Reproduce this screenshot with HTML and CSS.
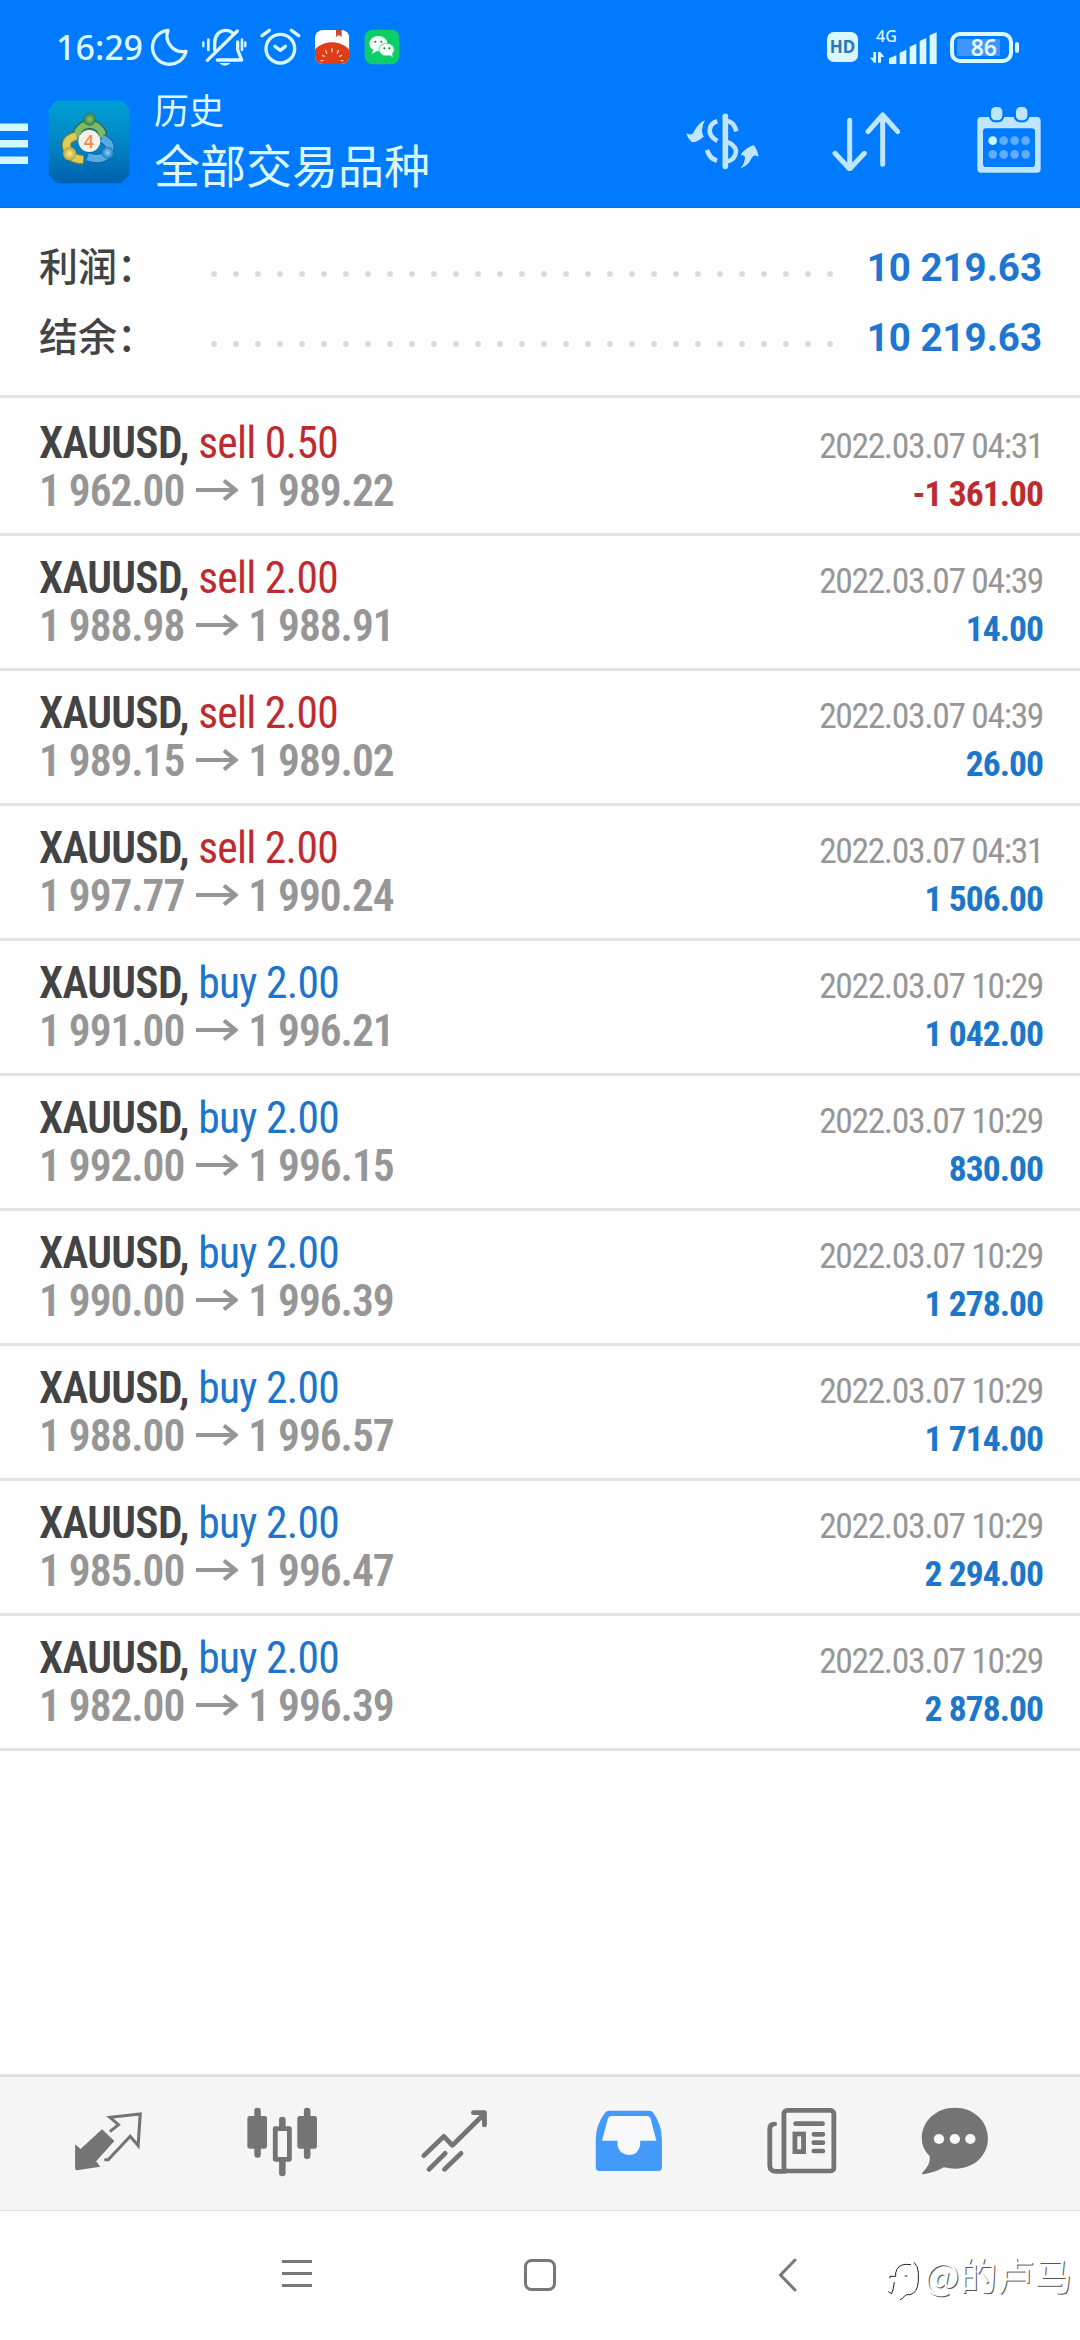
FILE: index.html
```html
<!DOCTYPE html>
<html lang="zh-CN">
<head>
<meta charset="utf-8">
<title>历史</title>
<link rel="stylesheet" href="styles.css">
</head>
<body>
<svg class="defs" width="0" height="0">
  <symbol id="arrow" viewBox="0 0 42 24"><path d="M0 12H39M28 2.5L39.5 12L28 21.5" fill="none" stroke="#969696" stroke-width="4.2"/></symbol>
</svg>
<header class="header">
  <div class="status">
    <div class="status-left">
      <span class="clock">16:29</span>
      <svg width="260" height="60" viewBox="0 0 780 180">
        <g fill="none" stroke="#d9f8ff" stroke-width="10" stroke-linecap="round" stroke-linejoin="round">
          <path transform="translate(4 0)" d="M50 31A51 51 0 1 0 104 94Q76 99 59 79Q40 57 50 31Z"/>
          <path d="M262 33L172 121M194 90V72Q194 34 226 31Q239 30 246 38M263 66V90L275 120H202"/>
          <path d="M175 59V90M276 59V90" stroke-width="8"/>
          <path d="M160 67V79M286 67V79" stroke-width="7"/>
          <circle cx="391" cy="86" r="43"/>
          <path d="M375 79L391 91L406 79M336 47L358 31M446 47L424 31"/>
        </g>
        <path d="M207 129H242Q225 145 207 129Z" fill="#d9f8ff"/>
        <clipPath id="appclip"><rect x="495" y="30" width="103" height="102" rx="24"/></clipPath>
        <g clip-path="url(#appclip)">
          <rect x="495" y="30" width="103" height="102" fill="#fff"/>
          <ellipse cx="546" cy="112" rx="60" ry="45" fill="#df3c18"/>
          <path d="M558 30H575V51L566 45L558 51Z" fill="#c64b37"/>
          <path d="M546 85V97M526 90L531 101M566 90L561 101M516 105L524 110M576 105L568 110M512 122H520M580 122H572" stroke="#ffd8b2" stroke-width="4"/>
        </g>
        <rect x="644" y="29" width="104" height="104" rx="24" fill="#0ccd68"/>
        <ellipse cx="685" cy="71" rx="27" ry="23" fill="#f3fff7"/><path d="M670 87L666 101L683 92Z" fill="#f3fff7"/>
        <ellipse cx="710" cy="89" rx="23" ry="19" fill="#f3fff7" stroke="#0ccd68" stroke-width="2"/><path d="M717 104L728 112L726 98Z" fill="#f3fff7"/>
        <g fill="#137945"><circle cx="676" cy="65" r="3"/><circle cx="694" cy="65" r="3"/><circle cx="703" cy="85" r="3"/><circle cx="718" cy="85" r="3"/></g>
      </svg>
    </div>
    <div class="status-right">
      <span class="hd">HD</span>
      <div class="signal">
        <span class="net">4G</span>
        <svg width="68" height="36" viewBox="0 0 204 108">
          <g fill="#d9f8ff"><path d="M60 108V91L82 82V108ZM92 108V74L112 65V108ZM122 108V56L142 47V108ZM152 108V39L172 30V108ZM182 108V22L203 13V108Z"/><path d="M13 72H21V104H15L3 89H13ZM27 104V72H34L46 87H36V104Z"/></g>
        </svg>
      </div>
      <div class="battery"><span>86</span></div>
      <i class="cap"></i>
    </div>
  </div>
  <div class="toolbar">
    <svg class="menu" width="28" height="42" viewBox="0 0 28 42"><path d="M0 4.3H28M0 20.8H28M0 37.3H28" stroke="#d4f8ff" stroke-width="7.6"/></svg>
    <svg class="logo" width="82" height="84" viewBox="0 0 246 252">
      <defs>
        <linearGradient id="bg" x2="0" y2="1"><stop offset="0" stop-color="#009fd5"/><stop offset=".5" stop-color="#0086c5"/><stop offset="1" stop-color="#0060af"/></linearGradient>
        <radialGradient id="gr"><stop offset="0" stop-color="#8ac875"/><stop offset="1" stop-color="#347d43"/></radialGradient>
        <radialGradient id="ye"><stop offset="0" stop-color="#f6ed96"/><stop offset="1" stop-color="#bda62e"/></radialGradient>
        <radialGradient id="bl"><stop offset="0" stop-color="#8ad6fb"/><stop offset="1" stop-color="#2479bd"/></radialGradient>
      </defs>
      <path d="M24 2H222L245 28V225L218 250H28L2 225V28Z" fill="url(#bg)"/>
      <g fill="none" stroke-linejoin="round">
        <path d="M165 113A40 40 0 1 0 85 113" stroke="#2b6b3c" stroke-width="27"/>
        <path d="M165 113A40 40 0 1 0 85 113" stroke="#7dbb6c" stroke-width="20"/>
        <path d="M85 108Q45 118 59 150Q64 177 106 179" stroke="#857a2c" stroke-width="29"/>
        <path d="M85 108Q45 118 59 150Q64 177 106 179" stroke="#d9cd5c" stroke-width="22"/>
        <path d="M162 115Q194 130 182 157Q165 186 119 170" stroke="#215f9c" stroke-width="29"/>
        <path d="M162 115Q194 130 182 157Q165 186 119 170" stroke="#55abe3" stroke-width="22"/>
      </g>
      <circle cx="125" cy="58" r="19" fill="url(#gr)"/><circle cx="65" cy="161" r="20" fill="url(#ye)"/><circle cx="179" cy="158" r="18" fill="url(#bl)"/>
      <circle cx="124" cy="123" r="33" fill="#f8f0e4"/>
      <text x="123" y="143" class="logo-four">4</text>
    </svg>
    <div class="titles"><div class="sub">历史</div><div class="title">全部交易品种</div></div>
    <svg class="tool" width="74" height="60" viewBox="0 0 222 180">
      <path d="M1 67L8 69Q16 74 23 64Q37 35 57 28Q49 42 48 58Q48 72 54 76Q36 94 18 94Q5 83 1 67Z" fill="#bfe5ff"/>
      <path d="M163 172Q177 157 177 137Q174 132 164 131Q178 111 203 102Q213 113 218 137L207 133Q199 136 195 145Q187 164 163 172Z" fill="#bfe5ff"/>
      <g fill="none" stroke="#bfe5ff" stroke-width="14"><path d="M94 31Q72 37 71 58Q71 78 94 90"/><path d="M63 117Q70 142 93 149"/><path d="M119 30Q143 29 151 61M119 92Q146 98 150 120Q149 147 119 153"/><path d="M118 16V166" stroke-width="17" stroke-linecap="round"/></g>
    </svg>
    <svg class="tool" width="68" height="60" viewBox="0 0 204 180">
      <path d="M53 32V173M9 131L53 178L97 131M152 164V18M108 66L152 16L197 66" transform="translate(0 -4)" fill="none" stroke="#bfe5ff" stroke-width="15" stroke-linecap="round" stroke-linejoin="round"/>
    </svg>
    <svg class="tool" width="64" height="66" viewBox="0 0 192 198">
      <path fill="#bfe5ff" fill-rule="evenodd" d="M12 30H36Q40 46 60 46Q78 46 80 30H110Q114 46 134 46Q154 46 156 30H180Q191 30 191 42V186Q191 197 180 197H12Q1 197 1 186V42Q1 30 12 30ZM28 64Q18 64 18 74V170Q18 180 28 180H164Q174 180 174 170V74Q174 64 164 64Z"/>
      <g fill="#bfe5ff" stroke="#007aff" stroke-width="6"><rect x="39" y="-3" width="40" height="46" rx="17"/><rect x="114" y="-3" width="40" height="46" rx="17"/></g>
      <g fill="#62acff"><circle cx="47" cy="101" r="13" fill="#c9f8ff"/><circle cx="80" cy="101" r="13"/><circle cx="113" cy="101" r="13"/><circle cx="146" cy="101" r="13"/><circle cx="47" cy="142" r="13"/><circle cx="80" cy="142" r="13"/><circle cx="113" cy="142" r="13"/><circle cx="146" cy="142" r="13"/></g>
    </svg>
  </div>
</header>
<main>
  <section class="summary">
    <div class="sum-row"><span class="label">利润：</span><i class="dots"></i><b>10 219.63</b></div>
    <div class="sum-row"><span class="label">结余：</span><i class="dots"></i><b>10 219.63</b></div>
  </section>
  <section class="deals">
    <article class="deal"><div class="line"><span class="sym">XAUUSD, <em class="sell">sell 0.50</em></span><time>2022.03.07 04:31</time></div><div class="line"><span class="price">1 962.00<svg><use href="#arrow"/></svg>1 989.22</span><b class="sell">-1 361.00</b></div></article>
    <article class="deal"><div class="line"><span class="sym">XAUUSD, <em class="sell">sell 2.00</em></span><time>2022.03.07 04:39</time></div><div class="line"><span class="price">1 988.98<svg><use href="#arrow"/></svg>1 988.91</span><b>14.00</b></div></article>
    <article class="deal"><div class="line"><span class="sym">XAUUSD, <em class="sell">sell 2.00</em></span><time>2022.03.07 04:39</time></div><div class="line"><span class="price">1 989.15<svg><use href="#arrow"/></svg>1 989.02</span><b>26.00</b></div></article>
    <article class="deal"><div class="line"><span class="sym">XAUUSD, <em class="sell">sell 2.00</em></span><time>2022.03.07 04:31</time></div><div class="line"><span class="price">1 997.77<svg><use href="#arrow"/></svg>1 990.24</span><b>1 506.00</b></div></article>
    <article class="deal"><div class="line"><span class="sym">XAUUSD, <em>buy 2.00</em></span><time>2022.03.07 10:29</time></div><div class="line"><span class="price">1 991.00<svg><use href="#arrow"/></svg>1 996.21</span><b>1 042.00</b></div></article>
    <article class="deal"><div class="line"><span class="sym">XAUUSD, <em>buy 2.00</em></span><time>2022.03.07 10:29</time></div><div class="line"><span class="price">1 992.00<svg><use href="#arrow"/></svg>1 996.15</span><b>830.00</b></div></article>
    <article class="deal"><div class="line"><span class="sym">XAUUSD, <em>buy 2.00</em></span><time>2022.03.07 10:29</time></div><div class="line"><span class="price">1 990.00<svg><use href="#arrow"/></svg>1 996.39</span><b>1 278.00</b></div></article>
    <article class="deal"><div class="line"><span class="sym">XAUUSD, <em>buy 2.00</em></span><time>2022.03.07 10:29</time></div><div class="line"><span class="price">1 988.00<svg><use href="#arrow"/></svg>1 996.57</span><b>1 714.00</b></div></article>
    <article class="deal"><div class="line"><span class="sym">XAUUSD, <em>buy 2.00</em></span><time>2022.03.07 10:29</time></div><div class="line"><span class="price">1 985.00<svg><use href="#arrow"/></svg>1 996.47</span><b>2 294.00</b></div></article>
    <article class="deal"><div class="line"><span class="sym">XAUUSD, <em>buy 2.00</em></span><time>2022.03.07 10:29</time></div><div class="line"><span class="price">1 982.00<svg><use href="#arrow"/></svg>1 996.39</span><b>2 878.00</b></div></article>
  </section>
</main>
<nav class="tabs">
  <svg width="72" height="72" viewBox="210 140 209 216" preserveAspectRatio="none"><path d="M297 210L333 245L280 306L292 322L224 333Q219 332 219 327V255L235 269Z" fill="#747474"/><path d="M320 217L345 196L320 174L408 164L402 259L379 231L315 301H304" fill="none" stroke="#747474" stroke-width="9"/></svg>
  <svg width="72" height="72" viewBox="711 138 209 216" preserveAspectRatio="none"><g fill="#747474"><rect x="715" y="168" width="57" height="98" rx="7"/><rect x="860" y="168" width="57" height="98" rx="7"/><rect x="735" y="143" width="19" height="150" rx="9"/><rect x="879" y="143" width="19" height="154" rx="9"/><rect x="807" y="170" width="19" height="35" rx="9"/><rect x="807" y="295" width="19" height="54" rx="9"/></g><rect x="796" y="206" width="41" height="92" fill="#f5f5f5" stroke="#747474" stroke-width="14" stroke-linejoin="round"/></svg>
  <svg width="72" height="72" viewBox="1216 138 209 216" preserveAspectRatio="none"><path d="M1230 287L1288 229L1313 256L1402 165M1374 158H1406V195M1245 328L1292 280M1290 328L1338 280" fill="none" stroke="#747474" stroke-width="14" stroke-linecap="round" stroke-linejoin="round"/></svg>
  <svg width="72" height="72" viewBox="150 138 209 216" preserveAspectRatio="none"><path d="M198 152H312Q321 152 325 158Q350 195 350 238V322Q350 333 339 333H169Q158 333 158 322V238Q158 195 185 158Q189 152 198 152Z" fill="#449afa"/><path d="M203 168H306Q314 168 317 175L334 242H287V255Q282 285 253 285Q226 283 221 255V242H176L193 176Q196 168 203 168Z" fill="#f7f8f9"/></svg>
  <svg width="72" height="72" viewBox="654 138 209 216" preserveAspectRatio="none"><g fill="none" stroke="#747474" stroke-width="14" stroke-linecap="round"><rect x="706" y="151" width="145" height="182" rx="10"/><path d="M679 192Q665 192 665 207V316Q665 334 681 334H710M740 191H818M793 223H819M793 248H819M793 273H819"/><rect x="738" y="222" width="25" height="53"/></g></svg>
  <svg width="72" height="72" viewBox="1095 138 209 216" preserveAspectRatio="none"><path d="M1199 143C1254 143 1295 183 1295 235C1295 288 1254 326 1201 326Q1184 326 1167 322Q1143 337 1108 343Q1100 342 1107 335Q1130 312 1126 289Q1103 266 1103 235C1103 183 1145 143 1199 143Z" fill="#747474"/><g fill="#f8f8f8"><circle cx="1153" cy="237" r="15"/><circle cx="1199" cy="237" r="15"/><circle cx="1244" cy="237" r="15"/></g></svg>
</nav>
<footer class="sysnav">
  <svg width="32" height="32" viewBox="0 0 32 32"><path d="M1 3.5H31M1 15.5H31M1 27.5H31" stroke="#777" stroke-width="3"/></svg>
  <svg width="34" height="34" viewBox="0 0 34 34"><rect x="2.5" y="2.5" width="29" height="29" rx="6" fill="none" stroke="#777" stroke-width="3"/></svg>
  <svg width="20" height="34" viewBox="0 0 20 34"><path d="M17 2L2.5 17L17 32" fill="none" stroke="#777" stroke-width="3" stroke-linecap="round"/></svg>
  <div class="mark">
    <svg width="38" height="52" viewBox="0 0 114 156"><path d="M12 76V70H29V60Q34 35 60 34L75 35M56 69H64M84 28Q96 38 97 58V85Q94 120 72 125H62Q56 127 49 137L42 140M25 87Q22 112 17 122L7 116" fill="none" stroke="#222" stroke-width="3"/></svg>
    <span>@的卢马</span>
  </div>
</footer>
</body>
</html>
```
FILE: styles.css
```css
* { box-sizing: border-box; }
body { margin: 0; width: 1080px; height: 2340px; display: flex; flex-direction: column; background: #fefefe; overflow: hidden; font-family: "Roboto Condensed", Roboto, "Noto Sans CJK SC", sans-serif; position: relative; }
svg { display: block; flex: none; }
.defs { position: absolute; }
.header { height: 208px; background: #007aff; border-bottom: 1px solid #0a6fdc; }
.status { height: 90px; display: flex; justify-content: space-between; padding: 20px 61px 0 56px; }
.status-left { display: flex; }
.clock { width: 94px; font: 500 34px/55px "Noto Sans", sans-serif; color: #d9f8ff; white-space: nowrap; }
.status-right { display: flex; padding-top: 12px; }
.hd { width: 31px; height: 30px; border-radius: 7px; background: #d9f8ff; color: #2878bb; font: 700 17px/30px "Noto Sans", sans-serif; text-align: center; }
.signal { width: 68px; height: 36px; margin: -4px 13px 0 11px; position: relative; }
.net { position: absolute; left: 7px; top: -1px; font: 500 16px/18px "Noto Sans", sans-serif; color: #d9f8ff; }
.battery { width: 63px; height: 31px; border: 4px solid #d9f8ff; border-radius: 10px; padding: 3px 9px 3px 3px; }
.battery span { display: block; height: 17px; background: #3f96ff; color: #e6fbff; font: 600 23px/17px "Noto Sans", sans-serif; text-align: right; padding-right: 3px; }
.cap { width: 4px; height: 11px; margin: 10px 0 0 2px; background: #d9f8ff; border-radius: 2px; }
.toolbar { height: 117px; display: flex; align-items: flex-start; }
.menu { margin-top: 33px; }
.logo { margin: 10px 0 0 20px; }
.logo-four { font: 500 54px "Noto Sans", sans-serif; fill: #f08548; text-anchor: middle; }
.titles { flex: none; width: 556px; margin-top: -2px; padding-left: 24px; color: #dcf9ff; font-family: "Noto Sans CJK SC", sans-serif; font-weight: 400; white-space: nowrap; }
.sub { font-size: 35px; line-height: 42px; }
.title { font-size: 46px; line-height: 66px; }
.tool { margin-top: 21px; }
.tool + .tool { margin-left: 72px; }
.tool + .tool + .tool { margin: 17px 0 0 77px; }
.summary { height: 190px; border-bottom: 3px solid #e3e3e3; padding: 22px 38px 0 39px; }
.sum-row { height: 70px; display: flex; line-height: 70px; }
.label { width: 172px; font: 500 39px/69px "Noto Sans CJK SC", sans-serif; color: #434343; }
.dots { width: 622px; height: 6px; margin-top: 41px; background: radial-gradient(circle at 3px 3px, #d9d9d9 2.4px, transparent 3.4px) 0 0 / 22px 6px repeat-x; }
.sum-row b { flex: 1; text-align: right; font-family: Roboto, sans-serif; font-size: 38.5px; color: #1d76d2; white-space: nowrap; padding-top: 4px; line-height: 68px; }
.deal { height: 135px; border-bottom: 3px solid #e3e3e3; padding: 18px 37px 0 39px; }
.deal:first-child { height: 138px; padding-top: 21px; }
.line { height: 48px; display: flex; justify-content: space-between; line-height: 50px; white-space: nowrap; }
.sym { font-size: 43.5px; font-weight: 600; color: #434343; letter-spacing: -.7px; }
.sym em { font-style: normal; font-weight: 400; color: #1c74cb; letter-spacing: -.7px; }
.sym .sell, .line b.sell { color: #be2b2f; }
.line time { font-size: 35.5px; line-height: 54px; color: #969696; letter-spacing: -1.35px; }
.price { font-size: 43.5px; font-weight: 600; color: #969696; display: flex; letter-spacing: -1.05px; }
.price svg { width: 42px; height: 24px; margin: 11px 10px 0 12px; }
.line b { font-size: 35.5px; line-height: 54px; color: #1c76c9; letter-spacing: -.95px; }
.tabs { height: 137px; margin-top: auto; border-top: 3px solid #e0e0e0; border-bottom: 1px solid #ddd; background: #f5f5f5; display: flex; padding: 29px 0 0 72px; gap: 101.5px; }
.tabs svg:last-child { margin-left: -21px; }
.sysnav { height: 129px; display: flex; padding: 47px 0 0 281px; align-items: flex-start; }
.sysnav > svg + svg { margin-left: 210px; }
.sysnav > svg + svg + svg { margin-left: 221px; }
.mark { display: flex; margin: -5px 0 0 88px; width: 196px; }
.mark span { color: #fefefe; font: 400 37.5px/42px "Noto Sans CJK SC", sans-serif; text-shadow: 1px 1px 0 #555; white-space: nowrap; }
```
